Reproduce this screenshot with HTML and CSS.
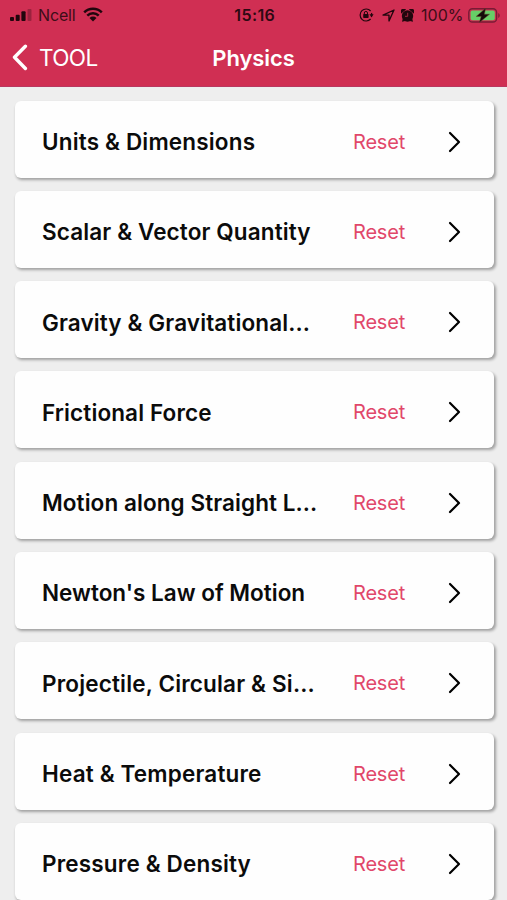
FILE: index.html
```html
<!DOCTYPE html>
<html lang="en">
<head>
<meta charset="utf-8">
<title>Physics</title>
<link rel="stylesheet" href="styles.css">
</head>
<body>
<svg class="defs" width="0" height="0"><symbol id="chevron" viewBox="0 0 14 22"><path d="M2 2l9 9-9 9" fill="none" stroke="#000" stroke-width="2.2" stroke-linecap="round" stroke-linejoin="round"/></symbol></svg>
<header class="header">
  <div class="status">
    <div class="status-left">
      <svg class="signal" width="22" height="12" viewBox="0 0 22 12"><rect y="8" width="4" height="4" rx="1"/><rect x="5.7" y="5.7" width="4" height="6.3" rx="1"/><rect x="11.4" y="2.2" width="4.2" height="9.8" rx="1"/><rect x="17.5" width="4" height="12" rx="1" opacity=".3"/></svg>
      <span class="carrier">Ncell</span>
      <svg class="wifi" width="20" height="15" viewBox="0 0 20 15"><path d="M1.2 5.4a12.6 12.6 0 0 1 17.6 0M4.3 8.7a8.1 8.1 0 0 1 11.4 0" fill="none" stroke="#21060d" stroke-width="2.5"/><path d="M6.5 11a5 5 0 0 1 7 0L10 14.5z"/></svg>
    </div>
    <span class="time">15:16</span>
    <div class="status-right">
      <svg width="15" height="14" viewBox="0 0 15 14"><path d="M11.6 3A6 6 0 1 0 11.6 11M12.5 5a6 6 0 0 1-.1 4" fill="none" stroke="#21060d" stroke-width="1.2"/><path d="M10.4 6.3h4.2l-2.1 2.9z"/><rect x="4.2" y="6" width="5.4" height="4" rx=".7"/><path d="M5.3 6.2V5a1.6 1.6 0 0 1 3.2 0v1.2" fill="none" stroke="#21060d"/></svg>
      <svg class="location" width="13" height="13" viewBox="0 0 13 13"><path d="M1 6.1L12 1 7 12V6.2z" fill="none" stroke="#21060d" stroke-width="1.35" stroke-linejoin="round"/></svg>
      <svg class="alarm" width="13" height="13" viewBox="0 0 13 13"><circle cx="6.5" cy="7" r="5.7"/><path d="M.4 4.6a3 3 0 0 1 4.6-4zM12.6 4.6A3 3 0 0 0 8 .6zM1 12.8l1-4 3.2 3zM12 12.8l-1-4-3.2 3z"/><path d="M6.7 3.8v3.5H4" fill="none" stroke="#a42640"/></svg>
      <span class="percent">100%</span>
      <svg class="battery" width="32" height="15" viewBox="0 0 32 15"><rect x=".8" y=".8" width="27.8" height="13.2" rx="3.6" fill="none" stroke="#781b35" stroke-width="1.4"/><rect x="2.6" y="2.6" width="24.2" height="9.6" rx="1.8" fill="#67ce67"/><path d="M30 5v5q2-.8 2-2.5T30 5z" fill="#8e203c"/><path d="M17.6.3L8.2 8.4h5L11.3 14.6l10.2-8.4h-5.1z" fill="#140a09" stroke="#67452f" stroke-width=".5"/></svg>
    </div>
  </div>
  <nav class="nav">
    <a class="back"><svg width="16" height="27" viewBox="0 0 16 27"><path d="M13.4 2.2L2.5 13.3l10.9 11.2" fill="none" stroke="#fff" stroke-width="3.4" stroke-linecap="round" stroke-linejoin="round"/></svg><span>TOOL</span></a>
    <h1 class="title">Physics</h1>
  </nav>
</header>
<main class="list">
  <div class="card"><span class="name wide">Units &amp; Dimensions</span><span class="reset">Reset</span><svg class="chev"><use href="#chevron"/></svg></div>
  <div class="card"><span class="name">Scalar &amp; Vector Quantity</span><span class="reset">Reset</span><svg class="chev"><use href="#chevron"/></svg></div>
  <div class="card"><span class="name">Gravity &amp; Gravitational...</span><span class="reset">Reset</span><svg class="chev"><use href="#chevron"/></svg></div>
  <div class="card"><span class="name">Frictional Force</span><span class="reset">Reset</span><svg class="chev"><use href="#chevron"/></svg></div>
  <div class="card"><span class="name snug">Motion along Straight L...</span><span class="reset">Reset</span><svg class="chev"><use href="#chevron"/></svg></div>
  <div class="card"><span class="name tight">Newton's Law of Motion</span><span class="reset">Reset</span><svg class="chev"><use href="#chevron"/></svg></div>
  <div class="card"><span class="name wide">Projectile, Circular &amp; Si...</span><span class="reset">Reset</span><svg class="chev"><use href="#chevron"/></svg></div>
  <div class="card"><span class="name wide">Heat &amp; Temperature</span><span class="reset">Reset</span><svg class="chev"><use href="#chevron"/></svg></div>
  <div class="card"><span class="name wide">Pressure &amp; Density</span><span class="reset">Reset</span><svg class="chev"><use href="#chevron"/></svg></div>
</main>
</body>
</html>
```
FILE: styles.css
```css
* { box-sizing: border-box; }
body {
  margin: 0;
  height: 900px;
  overflow: hidden;
  background: #eee;
  font-family: Inter, "Liberation Sans", sans-serif;
  color: #0b0b0b;
}
svg { display: block; flex: none; }
.defs { position: absolute; }
.header {
  height: 87px;
  background: #d02f53;
  border-bottom: 1px solid #b93860;
}
.status {
  display: grid;
  grid-template-columns: 1fr auto 1fr;
  height: 29px;
  padding: 1px 7.5px 0 10px;
  align-items: center;
  color: #3d0d18;
  fill: #21060d;
  font-size: 16px;
  line-height: 28px;
}
.status-left, .status-right { display: flex; align-items: center; }
.status-right { justify-content: flex-end; }
.carrier { margin-left: 6px; letter-spacing: -0.15px; }
.wifi { margin-left: 7px; margin-top: -2px; }
.time { font-weight: 600; font-size: 16px; letter-spacing: 0.4px; color: #2c0912; }
.location { margin-left: 8px; }
.alarm { margin-left: 6px; }
.percent { margin-left: 7px; letter-spacing: 0; }
.battery { margin-left: 4px; }
.nav {
  display: grid;
  grid-template-columns: 1fr auto 1fr;
  height: 57px;
  padding: 0 12px;
  align-items: center;
  color: #fff;
}
.back { display: flex; align-items: center; gap: 11px; font-size: 22.5px; letter-spacing: -0.6px; }
.title { margin: 0; font-size: 22px; font-weight: 600; letter-spacing: -0.1px; }
.list {
  display: flex;
  flex-direction: column;
  gap: 13.3px;
  padding: 13.5px 13.5px 0 14.5px;
}
.card {
  display: flex;
  flex: none;
  align-items: center;
  height: 77px;
  padding: 5px 32px 0 27.5px;
  border-radius: 6px;
  background: #fefefe;
  box-shadow: 1.5px 2px 3px rgba(0, 0, 0, 0.33);
}
.name { width: 311px; font-size: 22.5px; font-weight: 600; white-space: nowrap; letter-spacing: 0.12px; }
.wide { letter-spacing: 0.17px; }
.snug { letter-spacing: 0.08px; }
.tight { letter-spacing: 0; }
.reset { font-size: 20px; letter-spacing: -0.2px; color: #e1476a; }
.chev { width: 14px; height: 22px; margin-left: auto; }
```
